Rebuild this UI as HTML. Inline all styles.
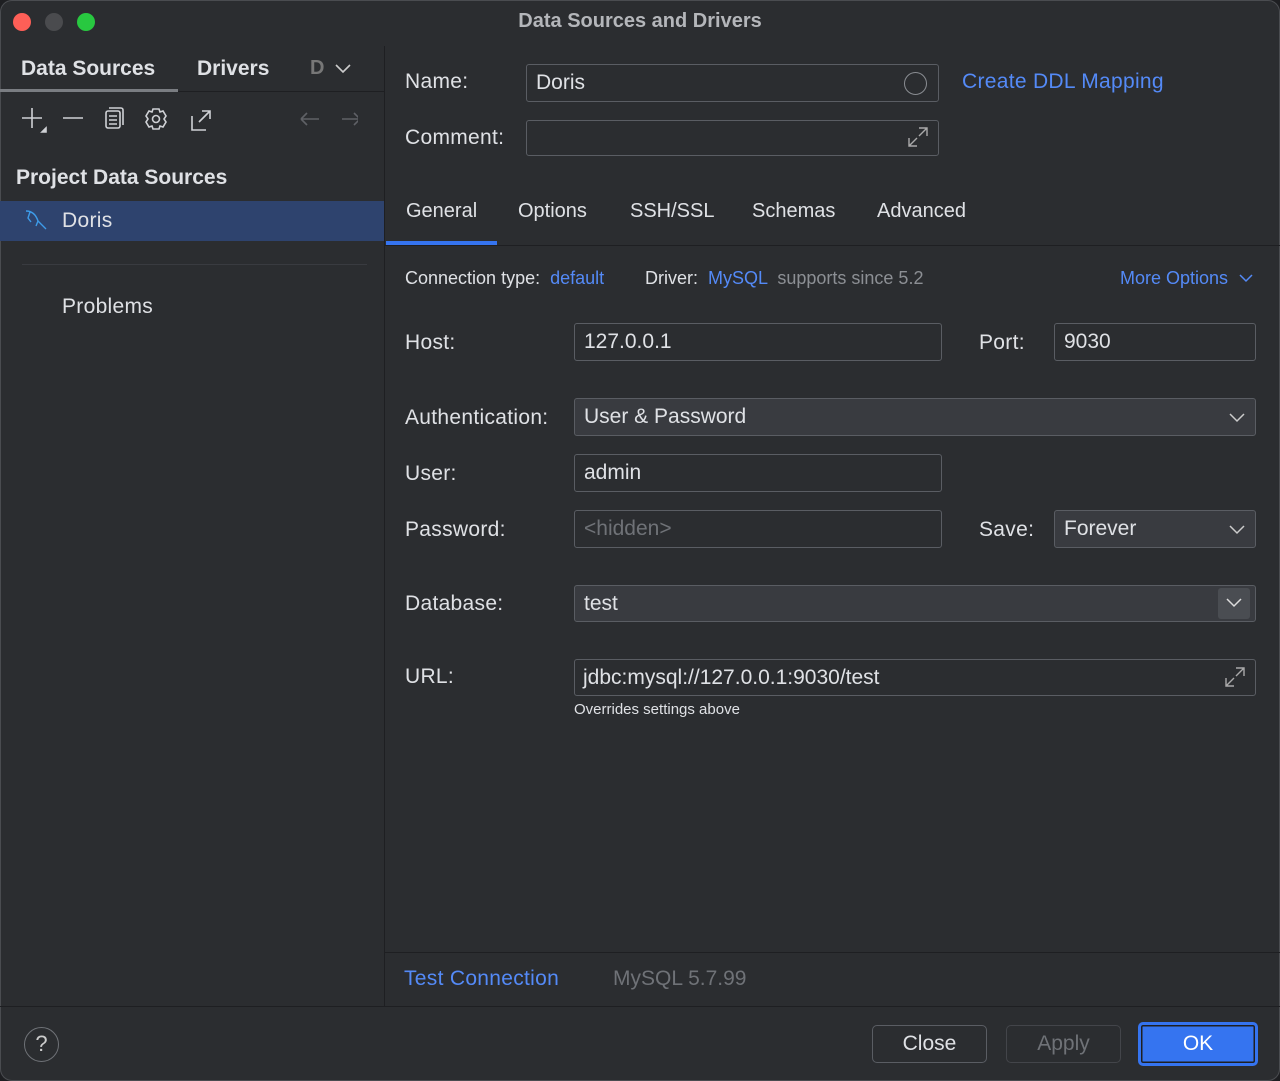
<!DOCTYPE html>
<html><head><style>
*{box-sizing:border-box;margin:0;padding:0}
body{width:1280px;height:1081px;background:#1e1f22;font-family:"Liberation Sans",sans-serif;color:#dfe1e5;overflow:hidden;position:relative}
.win{position:absolute;left:0;top:0;width:1280px;height:1081px;background:#2b2d30;border-radius:12px;box-shadow:inset 0 0 0 1px #4a4c50;overflow:hidden}
.a{position:absolute;white-space:nowrap}
.t{font-size:20px}
.l{font-size:21px;letter-spacing:0.3px}
.in{position:absolute;border:1px solid #5a5d63;border-radius:3px;background:#2b2d30;font-size:21px;padding-left:9px;display:flex;align-items:center}
.dd{background:#393b40}
.blue{color:#548af7}
.gray{color:#8c8f94}
.btn{position:absolute;border:1px solid #5a5d63;border-radius:5px;font-size:21px;display:flex;align-items:center;justify-content:center}
svg{position:absolute}
</style></head><body><div class="win">
<div class="a" style="left:13px;top:13px;width:18px;height:18px;border-radius:50%;background:#fe5f57"></div>
<div class="a" style="left:45px;top:13px;width:18px;height:18px;border-radius:50%;background:#4a4b4e"></div>
<div class="a" style="left:77px;top:13px;width:18px;height:18px;border-radius:50%;background:#28c840"></div>
<div class="a" style="left:0;top:10px;width:1280px;text-align:center;font-size:20px;font-weight:bold;color:#b4b6ba">Data Sources and Drivers</div>
<div class="a" style="left:384px;top:46px;width:1px;height:960px;background:#1e1f22"></div>
<div class="a" style="left:21px;top:57px;font-weight:bold;font-size:21px">Data Sources</div>
<div class="a" style="left:197px;top:57px;font-weight:bold;font-size:21px">Drivers</div>
<div class="a t" style="left:310px;top:57px;font-weight:bold;color:#777">D</div>
<svg style="left:334px;top:62px" width="18" height="14"><path d="M2 3l7 7 7-7" stroke="#ccc" stroke-width="1.6" fill="none"/></svg>
<div class="a" style="left:0;top:91px;width:384px;height:1px;background:#1e1f22"></div>
<div class="a" style="left:0;top:89px;width:178px;height:3px;background:#7a7d82"></div>
<svg style="left:18px;top:104px" width="340" height="30" fill="none" stroke="#cfd1d5" stroke-width="1.6">
<path d="M14 4v20M4 14h20"/><path d="M28 24l-4 4h4z" fill="#cfd1d5"/>
<path d="M45 14h20"/>
<rect x="88" y="7" width="14" height="17" rx="2"/><path d="M91 4h12a2 2 0 0 1 2 2v15M91 12h8M91 16h8M91 20h8"/>
<circle cx="138" cy="15" r="3.5"/><path d="M135 5h6l1 3 3-1 3 5-2 3 2 3-3 5-3-1-1 3h-6l-1-3-3 1-3-5 2-3-2-3 3-5 3 1z"/>
<path d="M174 12v14h14M184 7h8v8M192 7l-11 11"/>
<path stroke="#5f6166" d="M283 15h18M283 15l6-6M283 15l6 6M324 15h18M342 15l-6-6M342 15l-6 6"/>
</svg>
<div class="a" style="left:16px;top:166px;font-weight:bold;font-size:21px">Project Data Sources</div>
<div class="a" style="left:0;top:201px;width:384px;height:40px;background:#2e436e"></div>
<svg style="left:24px;top:208px" width="26" height="24" fill="none" stroke="#3d9be9" stroke-width="1.4"><path d="M2 3c6 0 10 4 12 10l3 3 5 5M6 4l-2 6 3 4M14 13l-2 5"/></svg>
<div class="a l" style="left:62px;top:209px">Doris</div>
<div class="a" style="left:22px;top:264px;width:345px;height:1px;background:#393b40"></div>
<div class="a l" style="left:62px;top:295px">Problems</div>

<div class="a l" style="left:405px;top:70px">Name:</div>
<div class="in" style="left:526px;top:64px;width:413px;height:38px">Doris</div>
<div class="a" style="left:904px;top:72px;width:23px;height:23px;border:1.5px solid #8a8d92;border-radius:50%"></div>
<div class="a blue" style="left:962px;top:70px;font-size:21px;letter-spacing:0.3px">Create DDL Mapping</div>
<div class="a l" style="left:405px;top:126px">Comment:</div>
<div class="in" style="left:526px;top:120px;width:413px;height:36px"></div>
<svg style="left:905px;top:124px" width="26" height="26" fill="none" stroke="#aaa" stroke-width="1.4"><path d="M14 4h8v8M22 4l-8 8M4 14v8h8M4 22l8-8"/></svg>

<div class="a t" style="left:406px;top:200px">General</div>
<div class="a t" style="left:518px;top:200px">Options</div>
<div class="a t" style="left:630px;top:200px">SSH/SSL</div>
<div class="a t" style="left:752px;top:200px">Schemas</div>
<div class="a t" style="left:877px;top:200px">Advanced</div>
<div class="a" style="left:386px;top:241px;width:111px;height:4px;background:#3574f0"></div>
<div class="a" style="left:385px;top:245px;width:895px;height:1px;background:#1e1f22"></div>

<div class="a" style="left:405px;top:268px;font-size:18px">Connection type: <span class="blue">&nbsp;default</span></div>
<div class="a" style="left:645px;top:268px;font-size:18px">Driver: <span class="blue">&nbsp;MySQL</span> <span class="gray">&nbsp;supports since 5.2</span></div>
<div class="a blue" style="left:1120px;top:268px;font-size:18px">More Options</div>
<svg style="left:1238px;top:271px" width="16" height="14"><path d="M2 4l6 6 6-6" stroke="#548af7" stroke-width="1.5" fill="none"/></svg>

<div class="a l" style="left:405px;top:331px">Host:</div>
<div class="in" style="left:574px;top:323px;width:368px;height:38px">127.0.0.1</div>
<div class="a l" style="left:979px;top:331px">Port:</div>
<div class="in" style="left:1054px;top:323px;width:202px;height:38px">9030</div>
<div class="a l" style="left:405px;top:406px">Authentication:</div>
<div class="in dd" style="left:574px;top:398px;width:682px;height:38px">User &amp; Password</div>
<svg style="left:1228px;top:410px" width="18" height="14"><path d="M2 4l7 7 7-7" stroke="#ccc" stroke-width="1.5" fill="none"/></svg>
<div class="a l" style="left:405px;top:462px">User:</div>
<div class="in" style="left:574px;top:454px;width:368px;height:38px">admin</div>
<div class="a l" style="left:405px;top:518px">Password:</div>
<div class="in" style="left:574px;top:510px;width:368px;height:38px;color:#6f7277">&lt;hidden&gt;</div>
<div class="a l" style="left:979px;top:518px">Save:</div>
<div class="in dd" style="left:1054px;top:510px;width:202px;height:38px">Forever</div>
<svg style="left:1228px;top:522px" width="18" height="14"><path d="M2 4l7 7 7-7" stroke="#ccc" stroke-width="1.5" fill="none"/></svg>
<div class="a l" style="left:405px;top:592px">Database:</div>
<div class="in dd" style="left:574px;top:585px;width:682px;height:37px">test</div>
<div class="a" style="left:1218px;top:588px;width:32px;height:31px;background:#4a4d52;border-radius:3px"></div>
<svg style="left:1225px;top:596px" width="18" height="14"><path d="M2 3l7 7 7-7" stroke="#ddd" stroke-width="1.5" fill="none"/></svg>
<div class="a l" style="left:405px;top:665px">URL:</div>
<div class="in" style="left:574px;top:659px;width:682px;height:37px;padding-left:8px">jdbc:mysql://127.0.0.1:9030/test</div>
<svg style="left:1222px;top:664px" width="26" height="26" fill="none" stroke="#aaa" stroke-width="1.4"><path d="M14 4h8v8M22 4l-8 8M4 14v8h8M4 22l8-8"/></svg>
<div class="a" style="left:574px;top:701px;font-size:15px">Overrides settings above</div>

<div class="a" style="left:385px;top:952px;width:895px;height:1px;background:#1e1f22"></div>
<div class="a blue" style="left:404px;top:967px;font-size:21px;letter-spacing:0.3px">Test Connection</div>
<div class="a gray" style="left:613px;top:967px;font-size:21px;color:#6f7277">MySQL 5.7.99</div>
<div class="a" style="left:0;top:1006px;width:1280px;height:1px;background:#1e1f22"></div>
<div class="a" style="left:24px;top:1027px;width:35px;height:35px;border:1.5px solid #6f7277;border-radius:50%;text-align:center;font-size:22px;line-height:32px;color:#ccc">?</div>
<div class="btn" style="left:872px;top:1025px;width:115px;height:38px">Close</div>
<div class="btn" style="left:1006px;top:1025px;width:115px;height:38px;border-color:#43454a;color:#6f7277">Apply</div>
<div class="btn" style="left:1138px;top:1022px;width:120px;height:44px;background:#3574f0;border:3px solid #3574f0;box-shadow:inset 0 0 0 1.5px #1e1f22;color:#fff">OK</div>
</div></body></html>
